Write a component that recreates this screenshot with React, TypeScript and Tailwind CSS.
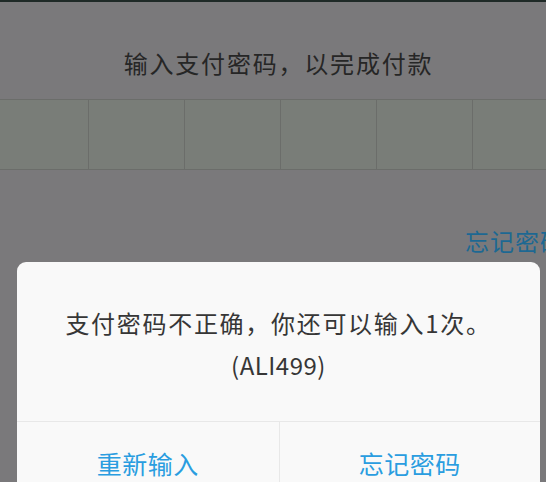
const cjk = { fontFamily: '"Noto Sans CJK SC", "Noto Sans", sans-serif' };

export default function App() {
  const cells = [0, 1, 2, 3, 4, 5];

  return (
    <div className="relative w-[546px] h-[482px] overflow-hidden bg-[#7a797b]" style={cjk}>
      <div className="w-[557px]">
        {/* status bar edge */}
        <div className="h-[2px] bg-[#1f2a27]" />

        {/* prompt */}
        <div className="pt-[45px] pb-[20px] text-center text-[24px] leading-[32px] tracking-[1.8px] text-[#262626]">
          输入支付密码，以完成付款
        </div>

        {/* password boxes */}
        <div className="flex -ml-[8px] border-y border-[#6b6d6a]">
          {cells.map((i) => (
            <div
              key={i}
              className={
                i === 0
                  ? "w-[96px] h-[69px] shrink-0 bg-[#797d78]"
                  : "w-[96px] h-[69px] shrink-0 bg-[#797d78] border-l border-[#6b6d6a]"
              }
            />
          ))}
        </div>

        {/* forgot link */}
        <div className="pt-[55px] pl-[465px] text-[24px] leading-[32px] tracking-[1px] text-[#1d6892] whitespace-nowrap">
          忘记密码
        </div>
      </div>

      {/* error dialog */}
      <div className="absolute left-[17px] top-[262px] w-[523px] rounded-[9px] bg-[#f9f9f9]">
        <div className="pt-[40px] pb-[35px] text-center text-[24px] leading-[42px] text-[#363636]">
          <div className="tracking-[1.7px]">支付密码不正确，你还可以输入1次。</div>
          <div className="tracking-[0.5px]">(ALI499)</div>
        </div>
        <div className="grid grid-cols-2 border-t border-[#e8e8e8]">
          <button className="h-[84px] text-[25px] tracking-[0.5px] text-[#2a9de0]">重新输入</button>
          <button className="h-[84px] text-[25px] tracking-[0.5px] text-[#2a9de0] border-l border-[#e8e8e8]">
            忘记密码
          </button>
        </div>
      </div>
    </div>
  );
}
